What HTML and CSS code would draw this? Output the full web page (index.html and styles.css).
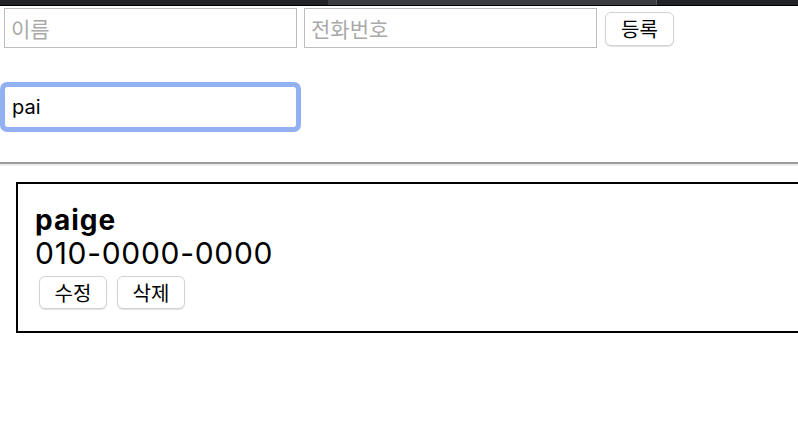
FILE: index.html
```html
<!DOCTYPE html>
<html lang="ko">
<head>
<meta charset="utf-8">
<title>연락처</title>
<link rel="stylesheet" href="styles.css">
</head>
<body>
<div class="topbar">
  <span class="seg seg-a"></span>
  <span class="seg seg-b"></span>
  <span class="seg seg-c"></span>
</div>
<div class="app">
  <form class="add-row">
    <input class="field" type="text" placeholder="이름">
    <input class="field" type="text" placeholder="전화번호">
    <button class="btn btn-add" type="button">등록</button>
  </form>
  <div class="search-row">
    <input class="field search" type="text" value="pai">
  </div>
  <hr class="divider">
  <ul class="list">
    <li class="card">
      <div class="name">paige</div>
      <div class="phone">010-0000-0000</div>
      <div class="actions">
        <button class="btn" type="button">수정</button>
        <button class="btn" type="button">삭제</button>
      </div>
    </li>
  </ul>
</div>
</body>
</html>
```
FILE: styles.css
```css
html, body {
  margin: 0;
  padding: 0;
  background: #fff;
}
body {
  font-family: Inter, "Noto Sans CJK KR", sans-serif;
  color: #000;
  overflow: hidden;
  width: 798px;
  height: 422px;
}
.topbar {
  display: flex;
  height: 5px;
  border-bottom: 1px solid #000;
}
.seg { display: block; height: 100%; }
.seg-a { width: 328px; background: #222326; }
.seg-b { width: 328px; background: #3b3c3f; border-right: 1px solid #56575a; }
.seg-c { flex: 1; background: #222326; }

.app { padding: 2px 0 0 4px; }

.add-row {
  display: flex;
  align-items: flex-start;
  margin: 0;
}
.field {
  box-sizing: border-box;
  width: 293px;
  height: 40px;
  border: 1px solid #bdbdbd;
  border-radius: 0;
  padding: 0 6px;
  font-family: "Noto Sans CJK KR", sans-serif;
  font-size: 21px;
  color: #000;
  background: #fff;
  outline: none;
  margin: 0;
}
.field::placeholder { color: #a9a9a9; }
.add-row .field + .field { margin-left: 7px; }
.btn {
  box-sizing: border-box;
  height: 33px;
  padding: 0 14px;
  border: 1px solid #d3d3d3;
  border-radius: 6px;
  background: #fff;
  box-shadow: 0 1px 1px rgba(0,0,0,0.12);
  font-family: "Noto Sans CJK KR", sans-serif;
  font-size: 20px;
  color: #000;
  line-height: 1;
}
.btn-add { margin: 4px 0 0 8px; height: 34px; width: 69px; padding: 0; }

.search-row { padding-top: 38px; }
.search {
  height: 42px;
  font-family: Inter, "Noto Sans CJK KR", sans-serif;
  font-size: 20px;
  padding-left: 7px;
  outline: 5px solid #92b1f2;
  outline-offset: -1px;
  border-radius: 3px;
  border-color: #b9b9b9;
}

.divider {
  margin: 34px 0 0 -4px;
  border: 0;
  border-top: 2px solid #9b9b9b;
  border-bottom: 2px solid #ededed;
  height: 0;
}

.list {
  list-style: none;
  margin: 16px 0 0 12px;
  padding: 0;
}
.card {
  width: 820px;
  box-sizing: border-box;
  border: 2px solid #000;
  padding: 20px 0 20px 17px;
  height: 151px;
}
.name {
  font-weight: 700;
  font-size: 28px;
  letter-spacing: 1px;
  line-height: 32px;
}
.phone {
  font-size: 30px;
  letter-spacing: 0.7px;
  line-height: 34px;
}
.actions {
  display: flex;
  gap: 10px;
  margin: 6px 0 0 4px;
}
.actions .btn { width: 68px; padding: 0; }
```
